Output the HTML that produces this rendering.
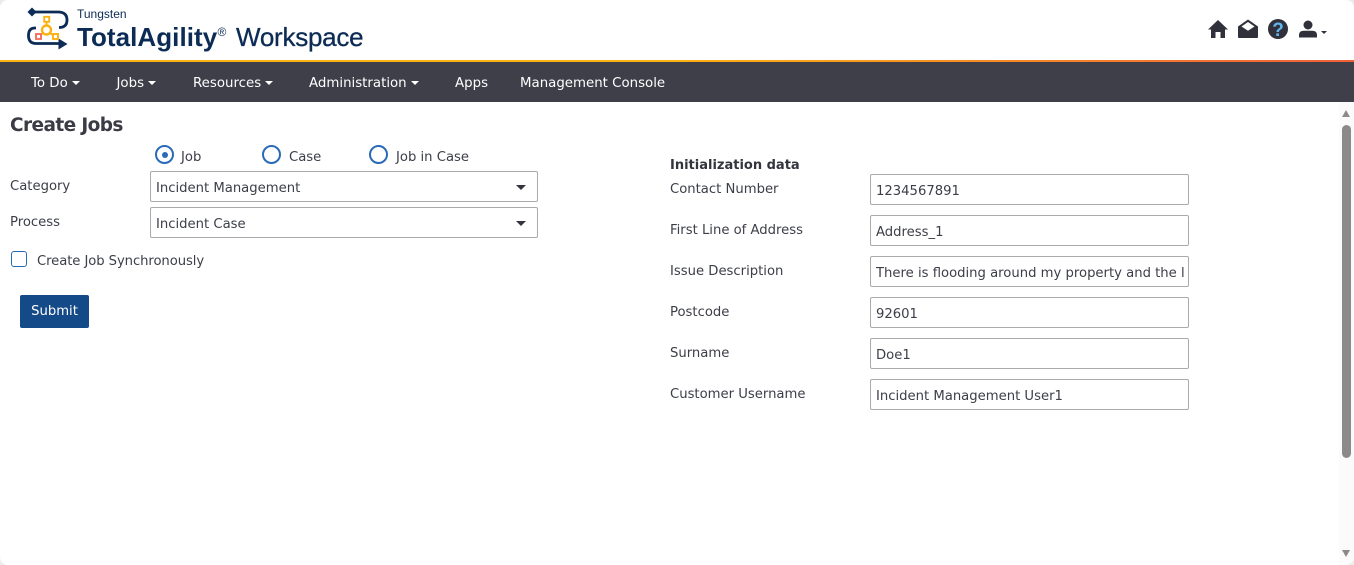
<!DOCTYPE html>
<html><head><meta charset="utf-8"><style>
*{box-sizing:border-box}
html,body{margin:0;padding:0;width:1354px;height:565px;overflow:hidden;background:#fff}
body{font-family:"DejaVu Sans","Liberation Sans",sans-serif;font-size:13.2px;color:#3c3e48;position:relative}
.t{position:absolute;white-space:nowrap;line-height:18px;margin-top:2px}
.logo{margin-top:0}
.nav{position:absolute;left:0;top:60px;width:1354px;height:42px;background:#3e3f49;border-top:2px solid;border-image:linear-gradient(90deg,#fbb013 0%,#fbb013 50%,#f0603a 100%) 1}
.n{position:absolute;top:74px;color:#fff;white-space:nowrap;line-height:20px;font-size:13.35px}
.c{display:inline-block;width:0;height:0;border-left:4px solid transparent;border-right:4px solid transparent;border-top:4px solid #fff;margin-left:4px;vertical-align:2px}
.box{position:absolute;border:1px solid #aaa;border-radius:2px;background:#fff;padding:3px 0 0 5px;white-space:nowrap;overflow:hidden;color:#3c3e48}
.sel{left:150px;width:388px;height:31px;line-height:28px}
.sel:after{content:"";position:absolute;right:11px;top:13px;border-left:5px solid transparent;border-right:5px solid transparent;border-top:5px solid #33343e}
.inp{left:870px;width:319px;height:31px;line-height:28px}
.r{position:absolute;top:145px;width:19px;height:19px;border:2px solid #2a6ab8;border-radius:50%}
</style></head><body>
<svg style="position:absolute;left:0;top:0" width="90" height="56" viewBox="0 0 90 56">
<path d="M27.500 12L32 7.500 36.500 12 32 16.500Z" fill="#0c2c55"/>
<path d="M33 12H58Q67 12 67 20 67 27.500 59 27.500" fill="none" stroke="#0c2c55" stroke-width="2.800"/>
<path d="M36 28H35Q28.500 28 28.500 35.500 28.500 43.500 36 43.500H60" fill="none" stroke="#0c2c55" stroke-width="2.800"/>
<path d="M58.500 38.500L67.500 44 58.500 49.500Z" fill="#0c2c55"/>
<circle cx="46.500" cy="30" r="4.500" fill="none" stroke="#fbb013" stroke-width="2.400"/>
<path d="M46.500 21V26M43 33L40 35M50 33L53 35" stroke="#fbb013" stroke-width="2"/>
<rect x="44.200" y="16.800" width="5" height="5" fill="#fff" stroke="#fbb013" stroke-width="1.900"/>
<rect x="36" y="34" width="5" height="5" fill="#fff" stroke="#f4705c" stroke-width="1.900"/>
<rect x="53" y="34" width="5" height="5" fill="#fff" stroke="#fbb013" stroke-width="1.900"/>
</svg>
<div class="t logo" style="left:77px;top:6px;font:12px/16px 'Liberation Sans',sans-serif;color:#0c2c55">Tungsten</div>
<div class="t logo" style="left:77px;top:21px;font:bold 26px/32px 'Liberation Sans',sans-serif;color:#0c2c55;letter-spacing:.05px">TotalAgility</div>
<div class="t logo" style="left:217.500px;top:26px;font:12px/12px 'Liberation Sans',sans-serif;color:#0c2c55">®</div>
<div class="t logo" style="left:236px;top:21px;font:26px/32px 'Liberation Sans',sans-serif;color:#0c2c55;-webkit-text-stroke:.3px #0c2c55;letter-spacing:-.25px">Workspace</div>

<svg style="position:absolute;left:1205px;top:16px" width="125" height="26" viewBox="0 0 125 26">
<path d="M13 4L23 13.500H20V22H15.500V16H10.500V22H6V13.500H3Z" fill="#30313b"/>
<path d="M33 10.500L43 3.500 53 10.500V21Q53 22 52 22H34Q33 22 33 21Z" fill="#30313b"/>
<path d="M36.500 10.500L43 6 49.500 10.500 43 14.800Z" fill="#fff"/>
<circle cx="73" cy="13" r="10" fill="#30313b"/>
<text x="73" y="20" text-anchor="middle" font-family="Liberation Sans" font-weight="bold" font-size="19" fill="#62b5ec">?</text>
<circle cx="103" cy="9" r="4.500" fill="#30313b"/>
<path d="M94 21.500V19Q94 14.800 99 14.800H107Q112 14.800 112 19V21.500Z" fill="#30313b"/>
<path d="M116 15H122L119 18Z" fill="#30313b"/>
</svg>

<div class="nav"></div>
<div class="n" style="left:31px">To Do<i class="c"></i></div>
<div class="n" style="left:116.500px">Jobs<i class="c"></i></div>
<div class="n" style="left:193px">Resources<i class="c"></i></div>
<div class="n" style="left:309px">Administration<i class="c"></i></div>
<div class="n" style="left:455px">Apps</div>
<div class="n" style="left:520px">Management Console</div>

<div class="t" style="left:10px;top:112px;font-size:18.500px;line-height:24px;font-weight:bold;color:#3a3b44;letter-spacing:-.6px">Create Jobs</div>
<div class="r" style="left:155px"></div><div style="position:absolute;left:161.500px;top:151.500px;width:6px;height:6px;background:#2a6ab8;border-radius:50%"></div>
<div class="t" style="left:181px;top:147px">Job</div>
<div class="r" style="left:262px"></div><div class="t" style="left:289px;top:147px">Case</div>
<div class="r" style="left:369px"></div><div class="t" style="left:396px;top:147px">Job in Case</div>
<div class="t" style="left:10px;top:176px">Category</div>
<div class="box sel" style="top:171px">Incident Management</div>
<div class="t" style="left:10px;top:212px">Process</div>
<div class="box sel" style="top:207px">Incident Case</div>
<div style="position:absolute;left:11px;top:251px;width:16px;height:16px;border:1.500px solid #2a6ab8;border-radius:3px"></div>
<div class="t" style="left:37px;top:251px;letter-spacing:-.08px">Create Job Synchronously</div>
<div style="position:absolute;left:20px;top:295px;width:69px;height:33px;background:#134a87;border-radius:2px;color:#fff;text-align:center;line-height:34px">Submit</div>

<div class="t" style="left:670px;top:155px;font-weight:bold;font-size:13px;color:#33343e">Initialization data</div>
<div class="t" style="left:670px;top:179px">Contact Number</div><div class="box inp" style="top:174px">1234567891</div>
<div class="t" style="left:670px;top:220px">First Line of Address</div><div class="box inp" style="top:215px">Address_1</div>
<div class="t" style="left:670px;top:261px">Issue Description</div><div class="box inp" style="top:256px">There is flooding around my property and the l</div>
<div class="t" style="left:670px;top:302px">Postcode</div><div class="box inp" style="top:297px">92601</div>
<div class="t" style="left:670px;top:343px">Surname</div><div class="box inp" style="top:338px">Doe1</div>
<div class="t" style="left:670px;top:384px">Customer Username</div><div class="box inp" style="top:379px">Incident Management User1</div>

<div style="position:absolute;left:1339px;top:102px;width:15px;height:463px;background:#fbfbfb"></div>
<div style="position:absolute;left:1342px;top:125px;width:9px;height:333px;background:#8a8a8a;border-radius:5px"></div>
<div style="position:absolute;left:1342px;top:110px;border-left:4.500px solid transparent;border-right:4.500px solid transparent;border-bottom:7px solid #8a8a8a"></div>
<div style="position:absolute;left:1342px;top:550px;border-left:4.500px solid transparent;border-right:4.500px solid transparent;border-top:7px solid #8a8a8a"></div>
<div style="position:absolute;left:-10px;top:-10px;width:1374px;height:585px;border:10px solid #ececec;border-radius:18px;pointer-events:none"></div>
</body></html>
